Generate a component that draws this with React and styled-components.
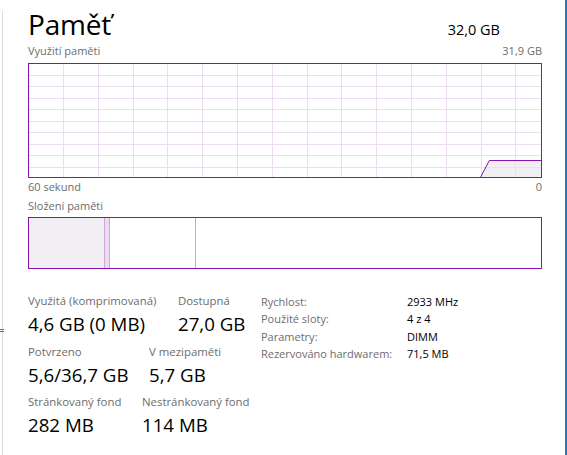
import React from 'react';
import styled, { createGlobalStyle } from 'styled-components';

const Global = createGlobalStyle`
  html, body { margin: 0; padding: 0; background: #fff; }
  body { font-family: "Open Sans", "Noto Sans", sans-serif; color: #000; }
`;

const PURPLE = '#8b12ae';
const GRID = '#ecdef0';
const FILL = '#f2eff4';
const LABEL = '#6d6d6d';

const Page = styled.div`
  position: relative;
  display: flex;
  width: 567px;
  height: 455px;
  background: #fff;
  overflow: hidden;
`;

const Gutter = styled.div`
  flex: none;
  width: 28px;
  display: flex;
  padding-top: 11px;
  box-sizing: border-box;
`;

const GutterLine = styled.div`
  margin-left: 2px;
  width: 1px;
  background: #dcdcdc;
`;

const Grip = styled.div`
  position: absolute;
  left: 0;
  top: 329px;
  width: 4px;
  height: 3px;
  border-top: 1px solid #6a6a6a;
  border-bottom: 1px solid #6a6a6a;
  box-sizing: border-box;
`;

const Main = styled.div`
  flex: none;
  width: 514px;
  display: flex;
  flex-direction: column;
`;

const Edge = styled.div`
  margin-left: auto;
  width: 2px;
  background: #1b7ccf;
`;

const Header = styled.div`
  flex: none;
  height: 43px;
  padding: 6px 42px 0 0;
  box-sizing: border-box;
  display: flex;
  justify-content: space-between;
  align-items: baseline;
`;

const Title = styled.div`
  font-size: 28px;
  line-height: 36px;
  font-weight: 400;
  letter-spacing: -0.2px;
`;

const Total = styled.div`
  font-size: 14.5px;
  line-height: 20px;
`;

const CaptionRow = styled.div`
  flex: none;
  display: flex;
  justify-content: space-between;
  height: 16px;
  margin-top: ${p => p.$mt || 0}px;
  font-size: 11px;
  line-height: 16px;
  color: ${LABEL};
`;

const Graph = styled.svg`
  flex: none;
  display: block;
  margin-top: 4px;
  width: 514px;
  height: 115px;
`;

const CompBar = styled.div`
  flex: none;
  margin-top: 3px;
  height: 52px;
  border: 1px solid ${PURPLE};
  box-sizing: border-box;
  display: flex;
`;

const Segment = styled.div`
  flex: ${p => (p.$grow ? '1' : 'none')};
  background: ${p => p.$bg};
  border-right: ${p => (p.$divider ? '1px solid #cfa6dc' : 'none')};
  box-sizing: border-box;
`;

const Stats = styled.div`
  flex: none;
  margin-top: 24px;
  display: flex;
`;

const LeftStats = styled.div`
  flex: none;
  width: 233px;
  display: flex;
  flex-direction: column;
  gap: 7.5px;
`;

const StatRow = styled.div`
  display: flex;
`;

const Stat = styled.div`
  flex: none;
  width: ${p => (p.$w ? `${p.$w}px` : 'auto')};
  display: flex;
  flex-direction: column;
`;

const StatLabel = styled.div`
  font-size: 11.4px;
  line-height: 16px;
  color: ${LABEL};
  white-space: nowrap;
`;

const StatValue = styled.div`
  margin-top: 3px;
  font-size: 18.7px;
  line-height: 24px;
  white-space: nowrap;
`;

const Specs = styled.div`
  display: grid;
  grid-template-columns: 146px auto;
  grid-auto-rows: 17.4px;
  font-size: 11px;
  line-height: 17.4px;
  white-space: nowrap;
`;

const SpecKey = styled.div`
  color: ${LABEL};
`;

const SpecVal = styled.div`
  color: #000;
`;

const vLines = Array.from({ length: 14 }, (_, i) => Math.round(35 + 34.8 * i) + 0.5);
const hLines = Array.from({ length: 9 }, (_, i) => Math.round(11.5 * (i + 1)) + 0.5);

function UsageGraph() {
  return (
    <Graph viewBox="0 0 514 115">
      <polygon points="452.7,114 461.3,97.5 513,97.5 513,114" fill={FILL} />
      {vLines.map(x => (
        <line key={'v' + x} x1={x} y1="1" x2={x} y2="114" stroke={GRID} strokeWidth="1" />
      ))}
      {hLines.map(y => (
        <line key={'h' + y} x1="1" y1={y} x2="513" y2={y} stroke={GRID} strokeWidth="1" />
      ))}
      <polyline points="452.7,114 461.3,97.5 513,97.5" fill="none" stroke={PURPLE} strokeWidth="1" />
      <rect x="0.5" y="0.5" width="513" height="114" fill="none" stroke={PURPLE} strokeWidth="1" />
    </Graph>
  );
}

const segments = [
  { w: 76, bg: FILL, divider: true },
  { w: 5, bg: '#ebdcef', divider: true },
  { w: 86, bg: '#fff', divider: true },
];

const stats = [
  {
    first: 150,
    items: [
      { label: 'Využitá (komprimovaná)', value: '4,6 GB (0 MB)' },
      { label: 'Dostupná', value: '27,0 GB' },
    ],
  },
  {
    first: 121,
    items: [
      { label: 'Potvrzeno', value: '5,6/36,7 GB' },
      { label: 'V mezipaměti', value: '5,7 GB' },
    ],
  },
  {
    first: 114,
    items: [
      { label: 'Stránkovaný fond', value: '282 MB' },
      { label: 'Nestránkovaný fond', value: '114 MB' },
    ],
  },
];

const specs = [
  ['Rychlost:', '2933 MHz'],
  ['Použité sloty:', '4 z 4'],
  ['Parametry:', 'DIMM'],
  ['Rezervováno hardwarem:', '71,5 MB'],
];

export default function App() {
  return (
    <>
      <Global />
      <Page>
        <Gutter>
          <GutterLine />
        </Gutter>
        <Grip />
        <Main>
          <Header>
            <Title>Paměť</Title>
            <Total>32,0 GB</Total>
          </Header>
          <CaptionRow>
            <span>Využití paměti</span>
            <span>31,9 GB</span>
          </CaptionRow>
          <UsageGraph />
          <CaptionRow $mt={1}>
            <span>60 sekund</span>
            <span>0</span>
          </CaptionRow>
          <CaptionRow $mt={3}>
            <span>Složení paměti</span>
          </CaptionRow>
          <CompBar>
            {segments.map((s, i) => (
              <Segment key={i} $bg={s.bg} $divider={s.divider} style={{ width: s.w }} />
            ))}
            <Segment $grow $bg="#fff" />
          </CompBar>
          <Stats>
            <LeftStats>
              {stats.map((row, i) => (
                <StatRow key={i}>
                  {row.items.map((s, j) => (
                    <Stat key={s.label} $w={j === 0 ? row.first : 0}>
                      <StatLabel>{s.label}</StatLabel>
                      <StatValue>{s.value}</StatValue>
                    </Stat>
                  ))}
                </StatRow>
              ))}
            </LeftStats>
            <Specs>
              {specs.map(([k, v]) => (
                <React.Fragment key={k}>
                  <SpecKey>{k}</SpecKey>
                  <SpecVal>{v}</SpecVal>
                </React.Fragment>
              ))}
            </Specs>
          </Stats>
        </Main>
        <Edge />
      </Page>
    </>
  );
}
